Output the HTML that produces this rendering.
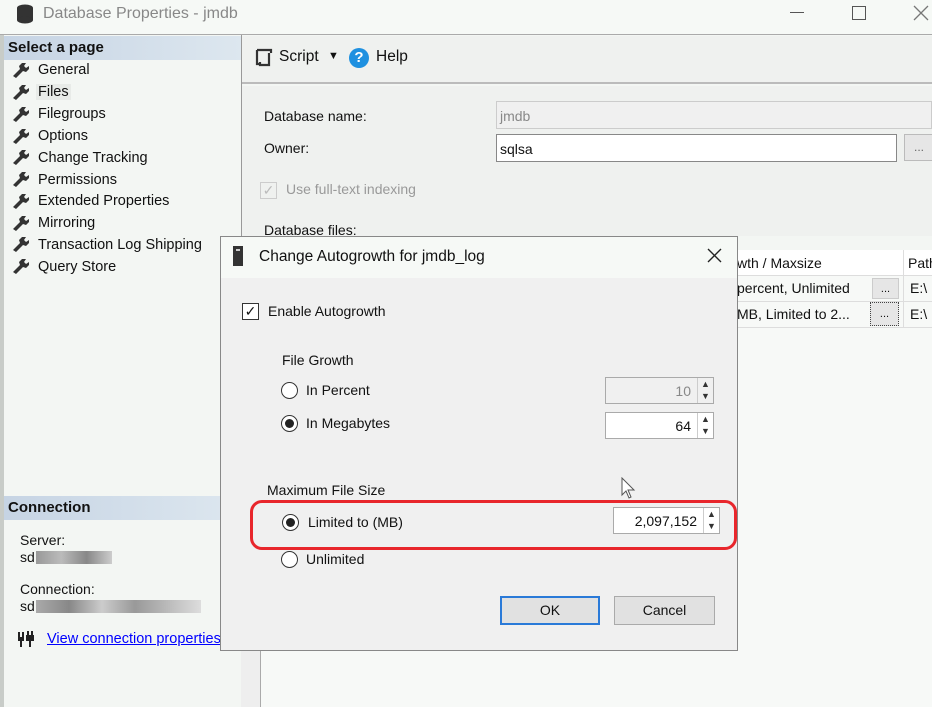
<!DOCTYPE html>
<html><head><style>
*{box-sizing:border-box;margin:0;padding:0}
body{width:932px;height:707px;overflow:hidden;background:#f3f6f3;font-family:"Liberation Sans",sans-serif;font-size:14px;color:#111;position:relative}
.a{position:absolute}
.nav div{position:absolute;left:38px;font-size:14.5px}
.rad{position:absolute;width:17px;height:17px;border:1px solid #333;border-radius:50%;background:#fff}
.rad.on::after{content:"";position:absolute;left:3px;top:3px;width:9px;height:9px;border-radius:50%;background:#222}
.spin{position:absolute;border:1px solid #aaa;background:#fff;text-align:right;padding-right:22px;font-size:14px;line-height:26px}
.spin .ar{position:absolute;right:0;top:0;width:16px;height:100%;border-left:1px solid #ccc;font-size:9px;line-height:12px;text-align:center;color:#333}
</style></head><body>
<div class="a" style="left:0;top:0;width:932px;height:35px;background:#f6f9f6;border-bottom:1px solid #aaa"></div>
<svg class="a" style="left:17px;top:4px" width="16" height="20"><ellipse cx="8" cy="4" rx="8" ry="3.5" fill="#333"/><rect x="0" y="4" width="16" height="12" fill="#333"/><ellipse cx="8" cy="16" rx="8" ry="3.5" fill="#333"/></svg>
<div class="a" style="left:43px;top:5px;font-size:16px;color:#888">Database Properties - jmdb</div>
<div class="a" style="left:790px;top:12px;width:14px;height:1px;background:#555"></div>
<div class="a" style="left:852px;top:6px;width:14px;height:14px;border:1px solid #555"></div>
<svg class="a" style="left:913px;top:5px" width="16" height="16"><path d="M1 1L15 15M15 1L1 15" stroke="#777" stroke-width="1.3"/></svg>
<div class="a" style="left:0;top:35px;width:4px;height:672px;background:#c8ccc8"></div>
<div class="a" style="left:4px;top:36px;width:237px;height:24px;background:linear-gradient(90deg,#c6d4e4,#dde7ef)"></div>
<div class="a" style="left:8px;top:39px;font-weight:bold;font-size:15px">Select a page</div>
<div class="nav">
<div style="top:62px">General</div><div style="top:84px;background:#e8ebe8;padding:0 2px;left:36px">Files</div><div style="top:106px">Filegroups</div><div style="top:128px">Options</div><div style="top:150px">Change Tracking</div><div style="top:172px">Permissions</div><div style="top:193px">Extended Properties</div><div style="top:215px">Mirroring</div><div style="top:237px">Transaction Log Shipping</div><div style="top:259px">Query Store</div>
</div>
<svg class="a" style="left:12px;top:62px" width="18" height="220">
<g fill="#333"><path id="w" d="M1 14 L8 7 L7 4 L10 1 L14 1 L12 4 L14 6 L17 4 L17 7 L14 10 L11 9 L4 16 Z"/>
<use href="#w" y="22"/><use href="#w" y="44"/><use href="#w" y="66"/><use href="#w" y="87"/><use href="#w" y="109"/><use href="#w" y="131"/><use href="#w" y="153"/><use href="#w" y="174"/><use href="#w" y="196"/></g></svg>
<div class="a" style="left:4px;top:496px;width:237px;height:24px;background:linear-gradient(90deg,#c6d4e4,#dde7ef)"></div>
<div class="a" style="left:8px;top:499px;font-weight:bold;font-size:15px">Connection</div>
<div class="a" style="left:20px;top:532px">Server:</div>
<div class="a" style="left:20px;top:549px">sd</div>
<div class="a" style="left:36px;top:551px;width:76px;height:13px;background:linear-gradient(90deg,#999,#bbb,#888,#ccc)"></div>
<div class="a" style="left:20px;top:581px">Connection:</div>
<div class="a" style="left:20px;top:598px">sd</div>
<div class="a" style="left:36px;top:600px;width:165px;height:13px;background:linear-gradient(90deg,#aaa,#888,#ccc,#999,#bbb,#ddd)"></div>
<svg class="a" style="left:17px;top:630px" width="18" height="18"><g fill="#222"><rect x="1" y="2" width="2" height="6"/><rect x="5" y="2" width="2" height="6"/><rect x="1" y="7" width="6" height="4"/><rect x="3" y="10" width="2" height="7"/><rect x="10" y="1" width="2" height="4"/><rect x="14" y="1" width="2" height="4"/><rect x="9" y="5" width="8" height="6"/><rect x="12" y="10" width="2" height="7"/></g></svg>
<div class="a" style="left:47px;top:631px;color:#00f;text-decoration:underline;font-size:14.5px">View connection properties</div>
<div class="a" style="left:241px;top:35px;width:1px;height:672px;background:#999"></div>
<div class="a" style="left:242px;top:36px;width:690px;height:48px;background:#eff1ef;border-bottom:2px solid #bbb"></div>
<div class="a" style="left:242px;top:86px;width:690px;height:150px;background:#eff1ef"></div>
<svg class="a" style="left:253px;top:48px" width="20" height="20"><path d="M4 2h14v3M4 2v14h3M7 16h-4M16 5v12h-9v-3" stroke="#333" stroke-width="2.2" fill="none"/></svg>
<div class="a" style="left:279px;top:48px;font-size:15.5px">Script</div>
<div class="a" style="left:328px;top:50px;font-size:11px">▼</div>
<div class="a" style="left:349px;top:48px;width:20px;height:20px;border-radius:50%;background:#1e90e0;color:#fff;font-weight:bold;text-align:center;line-height:20px;font-size:15px">?</div>
<div class="a" style="left:376px;top:48px;font-size:15.5px">Help</div>
<div class="a" style="left:264px;top:108px">Database name:</div>
<div class="a" style="left:264px;top:140px">Owner:</div>
<div class="a" style="left:496px;top:101px;width:436px;height:28px;border:1px solid #ccc;background:#f0f0f0;color:#888;padding:6px 3px">jmdb</div>
<div class="a" style="left:496px;top:134px;width:401px;height:28px;border:1px solid #888;background:#fff;padding:6px 3px">sqlsa</div>
<div class="a" style="left:904px;top:134px;width:30px;height:27px;border:1px solid #bbb;background:#e6e6e6;color:#666;text-align:center;font-size:12px;line-height:24px">...</div>
<div class="a" style="left:260px;top:182px;width:17px;height:17px;border:1px solid #ccc;color:#bbb;font-size:14px;line-height:15px;text-align:center">✓</div>
<div class="a" style="left:286px;top:181px;color:#999">Use full-text indexing</div>
<div class="a" style="left:264px;top:222px">Database files:</div>
<div class="a" style="left:260px;top:250px;width:672px;height:457px;background:#f7f9f7;border-left:1px solid #999"></div>
<div class="a" style="left:737px;top:250px;width:195px;height:26px;background:#fff;border-bottom:1px solid #ddd"></div>
<div class="a" style="left:737px;top:255px">wth / Maxsize</div>
<div class="a" style="left:903px;top:250px;width:1px;height:78px;background:#ddd"></div>
<div class="a" style="left:908px;top:255px">Path</div>
<div class="a" style="left:737px;top:280px">percent, Unlimited</div>
<div class="a" style="left:737px;top:306px">MB, Limited to 2...</div>
<div class="a" style="left:910px;top:280px">E:\</div><div class="a" style="left:910px;top:306px">E:\</div>
<div class="a" style="left:872px;top:278px;width:27px;height:21px;border:1px solid #ccc;background:#e6e6e6;text-align:center;font-size:11px;line-height:20px">...</div>
<div class="a" style="left:870px;top:302px;width:29px;height:24px;border:1px dotted #444;background:#e6e6e6;text-align:center;font-size:11px;line-height:22px">...</div>
<div class="a" style="left:737px;top:301px;width:195px;height:1px;background:#ddd"></div>
<div class="a" style="left:737px;top:327px;width:195px;height:1px;background:#ddd"></div>
<div class="a" style="left:241px;top:650px;width:20px;height:57px;background:#eee;border-right:1px solid #aaa"></div>
<div class="a" style="left:220px;top:236px;width:518px;height:415px;border:1px solid #888;background:#f0f0f0"></div>
<div class="a" style="left:221px;top:237px;width:516px;height:41px;background:#f6f9f6"></div>
<div class="a" style="left:233px;top:246px;width:10px;height:20px;background:#333"></div>
<div class="a" style="left:236px;top:249px;width:4px;height:2px;background:#ccc"></div>
<div class="a" style="left:259px;top:248px;font-size:15.5px">Change Autogrowth for jmdb_log</div>
<svg class="a" style="left:707px;top:248px" width="15" height="15"><path d="M1 1L14 14M14 1L1 14" stroke="#222" stroke-width="1.4"/></svg>
<div class="a" style="left:242px;top:303px;width:17px;height:17px;border:1px solid #333;background:#fff;text-align:center;line-height:15px;font-size:14px">✓</div>
<div class="a" style="left:268px;top:303px">Enable Autogrowth</div>
<div class="a" style="left:282px;top:352px">File Growth</div>
<div class="rad" style="left:281px;top:382px"></div>
<div class="a" style="left:306px;top:382px">In Percent</div>
<div class="rad on" style="left:281px;top:415px"></div>
<div class="a" style="left:306px;top:415px">In Megabytes</div>
<div class="spin" style="left:605px;top:377px;width:109px;height:27px;background:#f0f0f0;color:#888">10<div class="ar">▲<br>▼</div></div>
<div class="spin" style="left:605px;top:412px;width:109px;height:27px">64<div class="ar">▲<br>▼</div></div>
<div class="a" style="left:267px;top:482px">Maximum File Size</div>
<div class="rad on" style="left:282px;top:514px"></div>
<div class="a" style="left:308px;top:514px">Limited to (MB)</div>
<div class="spin" style="left:613px;top:507px;width:107px;height:27px">2,097,152<div class="ar">▲<br>▼</div></div>
<div class="a" style="left:250px;top:500px;width:487px;height:50px;border:3px solid #e8262c;border-radius:12px"></div>
<div class="rad" style="left:281px;top:551px"></div>
<div class="a" style="left:306px;top:551px">Unlimited</div>
<svg class="a" style="left:621px;top:477px" width="18" height="24"><path d="M1 1 L1 18 L5 14 L8 21 L10 20 L7 13 L13 13 Z" fill="#fff" stroke="#555"/></svg>
<div class="a" style="left:500px;top:596px;width:100px;height:29px;border:2px solid #2a7ad8;background:#e1e1e1;text-align:center;line-height:25px">OK</div>
<div class="a" style="left:614px;top:596px;width:101px;height:29px;border:1px solid #aaa;background:#e1e1e1;text-align:center;line-height:27px">Cancel</div>
</body></html>
